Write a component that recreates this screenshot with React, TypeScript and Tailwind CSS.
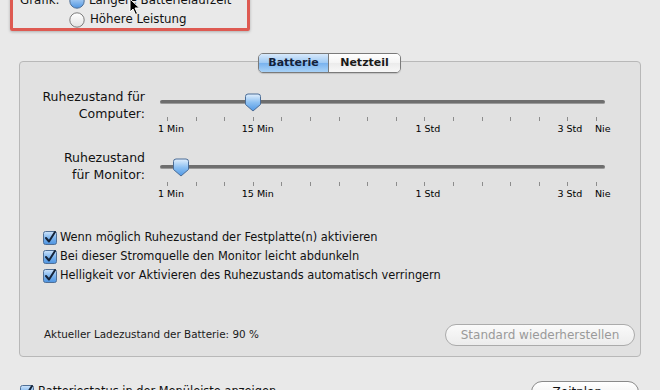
import React from "react";

const TICK_COUNT = 16;
const TICK_START = 7;
const TICK_STEP = 28.6;

function Knob() {
  return (
    <svg width="18" height="19" viewBox="0 0 18 19">
      <defs>
        <linearGradient id="kg" x1="0" y1="0" x2="0" y2="1">
          <stop offset="0" stopColor="#e3f0fd" />
          <stop offset="0.5" stopColor="#8cc0f2" />
          <stop offset="1" stopColor="#4f97e4" />
        </linearGradient>
      </defs>
      <path d="M1.5 3.5 Q1.5 1 4 1 H14 Q16.5 1 16.5 3.5 V11.5 L9 18 L1.5 11.5 Z" fill="url(#kg)" stroke="#4b6d97" strokeWidth="1" />
    </svg>
  );
}

function Slider({ knob }: { knob: number }) {
  const labels: { i: number; t: string; dx: number }[] = [
    { i: 0, t: "1 Min", dx: -9 },
    { i: 3, t: "15 Min", dx: -11 },
    { i: 9, t: "1 Std", dx: -9 },
    { i: 14, t: "3 Std", dx: -10 },
    { i: 15, t: "Nie", dx: -1 },
  ];
  return (
    <div className="relative w-[446px] h-[40px]">
      <div className="absolute left-0 top-[12px] w-[445px] h-[4px] rounded-full bg-[#6e6e6e] border-b border-[#9a9a9a]" />
      {Array.from({ length: TICK_COUNT }).map((_, i) => (
        <div
          key={i}
          className="absolute top-[29px] w-px h-[4px] bg-[#8c8c8c]"
          style={{ left: TICK_START + i * TICK_STEP }}
        />
      ))}
      {labels.map((l) => (
        <div
          key={l.t}
          className="absolute top-[35px] text-[9.5px] leading-[12px] text-[#000] whitespace-nowrap"
          style={{ left: TICK_START + l.i * TICK_STEP + l.dx }}
        >
          {l.t}
        </div>
      ))}
      <div className="absolute top-[5px]" style={{ left: knob - 9 }}>
        <Knob />
      </div>
    </div>
  );
}

function CheckBox() {
  return (
    <svg width="14" height="14" viewBox="0 0 14 14" className="shrink-0">
      <defs>
        <linearGradient id="cb" x1="0" y1="0" x2="0" y2="1">
          <stop offset="0" stopColor="#cfe4fa" />
          <stop offset="0.5" stopColor="#7db5ee" />
          <stop offset="1" stopColor="#4d93e0" />
        </linearGradient>
      </defs>
      <rect x="0.5" y="0.5" width="13" height="13" rx="2" fill="url(#cb)" stroke="#4f6f96" />
      <path d="M3 7 L6 10.5 L12 1" fill="none" stroke="#15243a" strokeWidth="2" strokeLinecap="round" strokeLinejoin="round" />
    </svg>
  );
}

function Radio({ on }: { on?: boolean }) {
  return (
    <svg width="16" height="16" viewBox="0 0 16 16" className="shrink-0">
      <defs>
        <linearGradient id="rw" x1="0" y1="0" x2="0" y2="1">
          <stop offset="0" stopColor="#ffffff" />
          <stop offset="1" stopColor="#e2e2e2" />
        </linearGradient>
        <linearGradient id="rb" x1="0" y1="0" x2="0" y2="1">
          <stop offset="0" stopColor="#d5e8fb" />
          <stop offset="1" stopColor="#4e95e2" />
        </linearGradient>
      </defs>
      <circle cx="8" cy="8" r="7.2" fill={on ? "url(#rb)" : "url(#rw)"} stroke={on ? "#4f6f96" : "#7c7c7c"} />
    </svg>
  );
}

export default function App() {
  return (
    <div
      className="relative w-[660px] h-[390px] overflow-hidden bg-[#e9e9e9] text-[#111]"
      style={{ fontFamily: '"DejaVu Sans", "Liberation Sans", sans-serif' }}
    >
      {/* Red highlighted box (top cut off) */}
      <div className="ml-[10px] mt-[-22px] w-[240px] h-[53px] border-[3px] border-[#de5a52] rounded-[2px] shadow-[0_1px_3px_rgba(0,0,0,0.25)] pl-[7px] pt-[11px]">
        <div className="flex items-center h-[18px] text-[11.8px]">
          <span className="w-[49px]">Grafik:</span>
          <Radio on />
          <span className="ml-[4px]">Längere Batterielaufzeit</span>
        </div>
        <div className="flex items-center h-[19px] text-[11.8px]">
          <span className="w-[49px]" />
          <Radio />
          <span className="ml-[5px]">Höhere Leistung</span>
        </div>
      </div>

      {/* Cursor */}
      <svg className="absolute left-[129px] top-[-2px]" width="12" height="18" viewBox="0 0 12 18">
        <path d="M1 1 L1 14 L4 11 L6.5 16.5 L8.5 15.5 L6 10 L10.5 10 Z" fill="#000" stroke="#fff" strokeWidth="1" />
      </svg>

      {/* Group panel */}
      <div className="relative ml-[19px] mt-[30px] w-[622px] h-[296px] border border-[#b8b8b8] rounded-[4px] bg-[#e1e1e1]">
        {/* Segmented control */}
        <div className="absolute left-[238px] top-[-9px] flex h-[20px] rounded-[5px] border border-[#7a7a7a] overflow-hidden text-[11px] font-bold shadow-[0_1px_1px_rgba(0,0,0,0.15)]">
          <div className="w-[70px] flex items-center justify-center text-[#13213a] bg-[linear-gradient(#d8e9fb,#9cc8f3_50%,#78b2ee_51%,#a9d2f7)] border-r border-[#7a7a7a]">
            Batterie
          </div>
          <div className="w-[71px] flex items-center justify-center text-[#1a1a1a] bg-[linear-gradient(#ffffff,#f4f4f4_50%,#ebebeb_51%,#f7f7f7)]">
            Netzteil
          </div>
        </div>

        {/* Slider 1 */}
        <div className="flex mt-[26px]">
          <div className="w-[125px] text-right text-[12.5px] leading-[17px]">
            Ruhezustand für
            <br />
            Computer:
          </div>
          <div className="ml-[15px]">
            <Slider knob={93} />
          </div>
        </div>

        {/* Slider 2 */}
        <div className="flex mt-[25px]">
          <div className="w-[125px] text-right text-[12.5px] leading-[17px] mt-[-4px]">
            Ruhezustand
            <br />
            für Monitor:
          </div>
          <div className="ml-[15px]">
            <Slider knob={21} />
          </div>
        </div>

        {/* Checkboxes */}
        <div className="mt-[35px] ml-[23px] flex flex-col text-[11.4px]">
          {[
            "Wenn möglich Ruhezustand der Festplatte(n) aktivieren",
            "Bei dieser Stromquelle den Monitor leicht abdunkeln",
            "Helligkeit vor Aktivieren des Ruhezustands automatisch verringern",
          ].map((t) => (
            <div key={t} className="flex items-center h-[19px] gap-[3px]">
              <CheckBox />
              <span>{t}</span>
            </div>
          ))}
        </div>

        {/* Bottom line */}
        <div className="flex items-center justify-between mt-[39px] ml-[24px] mr-[5px]">
          <span className="text-[10.4px] text-[#1a1a1a]">Aktueller Ladezustand der Batterie: 90 %</span>
          <div className="w-[190px] h-[22px] rounded-full border border-[#ababab] bg-[linear-gradient(#fafafa,#ececec)] flex items-center justify-center text-[12px] text-[#9a9a9a]">
            Standard wiederherstellen
          </div>
        </div>
      </div>

      {/* Bottom row, cut */}
      <div className="flex items-start justify-between mt-[24px] ml-[20px] mr-[21px]">
        <div className="flex items-center gap-[4px] text-[11.4px] mt-[2px]">
          <CheckBox />
          <span>Batteriestatus in der Menüleiste anzeigen</span>
        </div>
        <div className="w-[108px] h-[22px] rounded-full border border-[#8a8a8a] bg-[linear-gradient(#ffffff,#ececec)] flex items-center justify-center text-[12px]">
          Zeitplan ...
        </div>
      </div>
    </div>
  );
}
